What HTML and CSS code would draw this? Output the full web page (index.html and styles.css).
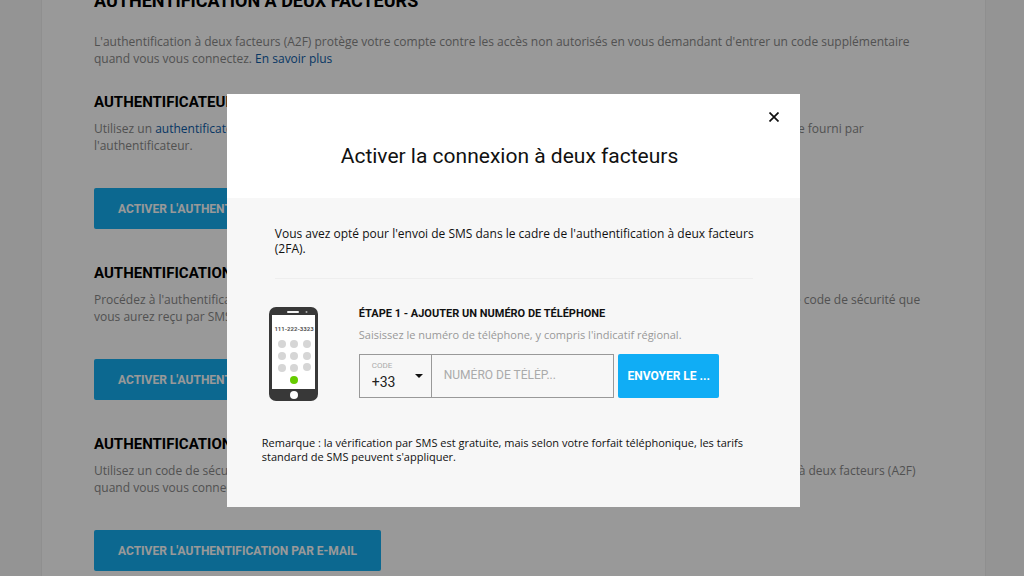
FILE: index.html
```html
<!DOCTYPE html>
<html lang="fr">
<head>
<meta charset="utf-8">
<meta name="viewport" content="width=device-width, initial-scale=1">
<title>Authentification à deux facteurs</title>
<link rel="stylesheet" href="styles.css">
</head>
<body>
<main class="page">
  <h1 class="page-title">Authentification à deux facteurs</h1>
  <p class="text">L'authentification à deux facteurs (A2F) protège votre compte contre les accès non autorisés en vous demandant d'entrer un code supplémentaire<br>quand vous vous connectez. <a class="link" href="#">En savoir plus</a></p>

  <section class="method">
    <h2 class="method-title">Authentificateur</h2>
    <p class="text">Utilisez un <a class="link" href="#">authentificateur</a> pour l'A2F. Ensuite, quand vous vous connectez, vous devrez alors entrer le code de sécurité unique fourni par<br>l'authentificateur.</p>
    <button class="button" type="button">Activer l'authentificateur</button>
  </section>

  <section class="method">
    <h2 class="method-title">Authentification par SMS</h2>
    <p class="text">Procédez à l'authentification à deux facteurs par SMS. Lorsque vous vous connectez, vous devrez alors entrer manuellement le code de sécurité que<br>vous aurez reçu par SMS.</p>
    <button class="button" type="button">Activer l'authentification par SMS</button>
  </section>

  <section class="method">
    <h2 class="method-title">Authentification par e-mail</h2>
    <p class="text">Utilisez un code de sécurité envoyé à votre adresse e-mail comme deuxième facteur de sécurité pour activer l'authentification à deux facteurs (A2F)<br>quand vous vous connectez.</p>
    <button class="button" type="button">Activer l'authentification par e-mail</button>
  </section>
</main>

<div class="overlay">
  <div class="modal" role="dialog" aria-modal="true" aria-labelledby="modal-title">
    <header class="modal-header">
      <button class="close" type="button" aria-label="Fermer">
        <svg width="10" height="10" viewBox="0 0 10 10" fill="none" stroke="#111" stroke-width="1.700"><path d="M.5.5l9 9M9.500.5l-9 9"/></svg>
      </button>
      <h2 class="modal-title" id="modal-title">Activer la connexion à deux facteurs</h2>
    </header>
    <div class="modal-body">
      <p class="intro">Vous avez opté pour l'envoi de SMS dans le cadre de l'authentification à deux facteurs<br>(2FA).</p>
      <form class="step">
        <svg class="phone" width="49" height="94" viewBox="0 0 49 94" aria-hidden="true">
          <rect width="49" height="94" rx="7" fill="#383838"/>
          <rect x="3" y="8" width="43" height="74" fill="#fff"/>
          <rect x="18" y="4" width="12" height="2" rx="1" fill="#f4f4f4"/>
          <circle cx="37.500" cy="5" r="1" fill="#aaa"/>
          <text class="phone-number" x="25" y="23.500" text-anchor="middle">111-222-3323</text>
          <g fill="#d6d6d6">
            <circle cx="13" cy="37" r="4"/><circle cx="25" cy="37" r="4"/><circle cx="38" cy="37" r="4"/>
            <circle cx="13" cy="49" r="4"/><circle cx="25" cy="49" r="4"/><circle cx="38" cy="49" r="4"/>
            <circle cx="13" cy="61" r="4"/><circle cx="25" cy="61" r="4"/><circle cx="38" cy="60" r="4"/>
          </g>
          <circle cx="25" cy="73" r="4" fill="#6c0"/>
          <circle cx="25" cy="88" r="4" fill="#fff"/>
        </svg>
        <div class="step-main">
          <h3 class="step-title">Étape 1 - Ajouter un numéro de téléphone</h3>
          <p class="step-hint">Saisissez le numéro de téléphone, y compris l'indicatif régional.</p>
          <div class="fields">
            <div class="code">
              <label class="code-label" for="code">Code</label>
              <select class="code-select" id="code"><option>+33</option></select>
              <svg class="code-arrow" width="8" height="4" viewBox="0 0 8 4" aria-hidden="true"><path d="M0 0h8L4 4z" fill="#111"/></svg>
            </div>
            <input class="number" type="tel" aria-label="Numéro de téléphone" placeholder="NUMÉRO DE TÉLÉP...">
            <button class="send" type="button">Envoyer le ...</button>
          </div>
        </div>
      </form>
      <p class="note">Remarque : la vérification par SMS est gratuite, mais selon votre forfait téléphonique, les tarifs<br>standard de SMS peuvent s'appliquer.</p>
    </div>
  </div>
</div>
</body>
</html>
```

FILE: styles.css
```css
* {
  box-sizing: border-box;
}

body {
  margin: 0;
  height: 100vh;
  overflow: hidden;
  background: #f7f7f7;
  color: #111;
  font-family: Roboto, "Liberation Sans", sans-serif;
  font-size: 12px;
}

h1, h2, h3, p {
  margin: 0;
}

p {
  font-family: "Open Sans", "Noto Sans", sans-serif;
}

button, input, select {
  font-family: inherit;
}

.page {
  margin: -11px 38px 0 41px;
  padding: 0 52px 40px;
  border: solid #eee;
  border-width: 0 1px;
  background: #fff;
}

.page-title {
  margin-bottom: 20px;
  color: #000;
  font-size: 18px;
  line-height: 24px;
  text-transform: uppercase;
}

.text {
  color: #888;
  font-size: 12px;
  line-height: 17px;
  white-space: nowrap;
}

.link {
  color: #0d5ca8;
  font-weight: 500;
  text-decoration: none;
}

.method {
  margin-top: 23px;
}

.method + .method {
  margin-top: 32px;
}

.method-title {
  margin-bottom: 6px;
  color: #000;
  font-size: 15px;
  line-height: 24px;
  text-transform: uppercase;
}

.button {
  height: 41px;
  margin-top: 34px;
  padding: 0 24px;
  border: 0;
  border-radius: 2px;
  background: #14aef0;
  color: #fff;
  font-size: 12px;
  font-weight: 700;
  text-transform: uppercase;
}

.overlay {
  position: fixed;
  inset: 0;
  display: flex;
  justify-content: center;
  align-items: flex-start;
  padding: 94px 0 0 3px;
  background: rgba(0, 0, 0, .4);
}

.modal {
  width: 56vw;
  min-width: 560px;
  background: #f7f7f7;
}

.modal-header {
  display: flex;
  flex-direction: column;
  padding: 16px 19px 28px;
  background: #fff;
}

.close {
  display: grid;
  place-items: center;
  align-self: flex-end;
  width: 14px;
  height: 14px;
  padding: 0;
  border: 0;
  background: none;
}

.modal-title {
  margin-top: 18px;
  padding-right: 8px;
  font-size: 21px;
  font-weight: 400;
  line-height: 28px;
  text-align: center;
}

.modal-body {
  padding: 28px 35px 43px;
}

.intro {
  margin: 0 12px 0 13px;
  padding-bottom: 22px;
  border-bottom: 1px solid #eee;
  font-size: 12px;
  line-height: 15px;
  white-space: nowrap;
}

.step {
  display: flex;
  gap: 41px;
  padding: 28px 46px 0 7px;
}

.phone {
  flex: none;
}

.phone-number {
  fill: #555;
  font-size: 6px;
  font-weight: 700;
}

.step-main {
  flex: 1;
}

.step-title {
  font-size: 11px;
  line-height: 14px;
  text-transform: uppercase;
}

.step-hint {
  margin: 6px 0 12px;
  color: #999;
  font-size: 11px;
  line-height: 15px;
}

.fields {
  display: flex;
  height: 44px;
}

.code {
  position: relative;
  flex: none;
  display: flex;
  flex-direction: column;
  width: 73px;
  padding-top: 6px;
  border: 1px solid #999;
}

.code-label {
  padding-left: 12px;
  color: #aaa;
  font-size: 8px;
  line-height: 10px;
  text-transform: uppercase;
}

.code-select {
  height: 21px;
  padding: 0 12px;
  border: 0;
  appearance: none;
  background: none;
  color: #222;
  font-size: 14px;
}

.code-arrow {
  position: absolute;
  top: 19px;
  right: 8px;
  pointer-events: none;
}

.number {
  flex: 1;
  min-width: 0;
  padding: 0 12px 2px;
  border: 1px solid #999;
  border-left: 0;
  border-radius: 0;
  background: none;
  font-size: 12px;
}

.number::placeholder {
  color: #aaa;
}

.send {
  flex: none;
  width: 101px;
  margin-left: 4px;
  padding: 0;
  border: 0;
  border-radius: 2px;
  background: #10adf5;
  color: #fff;
  font-size: 12px;
  font-weight: 700;
  text-transform: uppercase;
}

.note {
  margin-top: 35px;
  font-size: 11px;
  line-height: 14px;
  white-space: nowrap;
}
```
